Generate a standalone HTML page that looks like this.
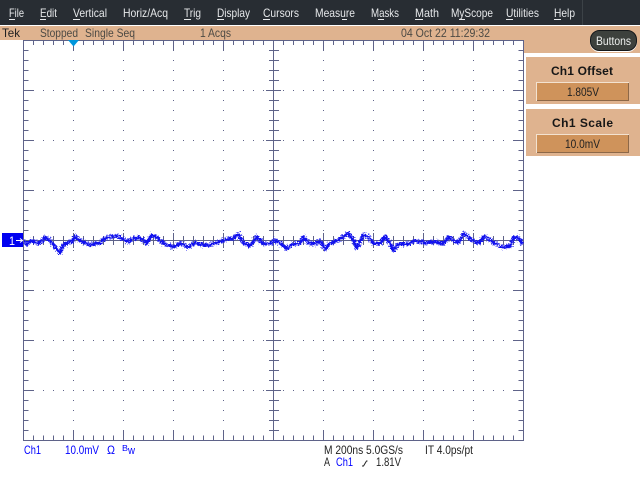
<!DOCTYPE html>
<html><head><meta charset="utf-8"><title>Tek</title>
<style>
html,body{margin:0;padding:0;background:#fff;width:640px;height:480px;overflow:hidden}
svg{display:block;position:absolute;left:0;top:0}
text{font-family:"Liberation Sans",sans-serif;font-size:12px}
.m{fill:#e6e8ea}
.s{fill:#4c4a44}
.b{fill:#0000ff}
.k{fill:#222}
.h{font-weight:bold;fill:#161616;font-size:12px}
.g line{stroke:#5f6389;shape-rendering:crispEdges}
.d line{stroke:#5f6389;stroke-width:1;stroke-dasharray:1 9;shape-rendering:crispEdges}
</style></head><body>
<svg width="640" height="480" viewBox="0 0 640 480">
<defs>
<filter id="j" x="-2%" y="-40%" width="104%" height="180%" color-interpolation-filters="sRGB"><feTurbulence type="fractalNoise" baseFrequency="0.6 0.8" numOctaves="2" seed="7" result="n"/><feDisplacementMap in="SourceGraphic" in2="n" scale="7" xChannelSelector="R" yChannelSelector="G"/></filter>
</defs>
<rect width="640" height="480" fill="#fff"/>
<rect width="640" height="25" fill="#282d33"/>
<rect x="524" y="26" width="116" height="27" fill="#dfb38f"/>
<rect y="26" width="640" height="14" fill="#dfb38f"/>
<rect x="582" y="0" width="1" height="25" fill="#3c4247"/>

<text class="m" x="9" y="17" textLength="15" lengthAdjust="spacingAndGlyphs">File</text>
<text class="m" x="40" y="17" textLength="17" lengthAdjust="spacingAndGlyphs">Edit</text>
<text class="m" x="73" y="17" textLength="34" lengthAdjust="spacingAndGlyphs">Vertical</text>
<text class="m" x="123" y="17" textLength="45" lengthAdjust="spacingAndGlyphs">Horiz/Acq</text>
<text class="m" x="184" y="17" textLength="17" lengthAdjust="spacingAndGlyphs">Trig</text>
<text class="m" x="217" y="17" textLength="33" lengthAdjust="spacingAndGlyphs">Display</text>
<text class="m" x="263" y="17" textLength="36" lengthAdjust="spacingAndGlyphs">Cursors</text>
<text class="m" x="315" y="17" textLength="40" lengthAdjust="spacingAndGlyphs">Measure</text>
<text class="m" x="371" y="17" textLength="28" lengthAdjust="spacingAndGlyphs">Masks</text>
<text class="m" x="415" y="17" textLength="24" lengthAdjust="spacingAndGlyphs">Math</text>
<text class="m" x="451" y="17" textLength="42" lengthAdjust="spacingAndGlyphs">MyScope</text>
<text class="m" x="506" y="17" textLength="33" lengthAdjust="spacingAndGlyphs">Utilities</text>
<text class="m" x="554" y="17" textLength="21" lengthAdjust="spacingAndGlyphs">Help</text>
<g fill="#e6e8ea" shape-rendering="crispEdges">
<rect x="9" y="19" width="6" height="1"/><rect x="40" y="19" width="6" height="1"/><rect x="73" y="19" width="7" height="1"/><rect x="184" y="19" width="7" height="1"/><rect x="217" y="19" width="7" height="1"/><rect x="263" y="19" width="7" height="1"/><rect x="342" y="19" width="5" height="1"/><rect x="378" y="19" width="6" height="1"/><rect x="415" y="19" width="8" height="1"/><rect x="459" y="19" width="6" height="1"/><rect x="506" y="19" width="7" height="1"/><rect x="554" y="19" width="7" height="1"/>
</g>

<text class="k" x="2" y="37" textLength="18" lengthAdjust="spacingAndGlyphs">Tek</text>
<text class="s" x="40" y="37" textLength="38" lengthAdjust="spacingAndGlyphs">Stopped</text>
<text class="s" x="85" y="37" textLength="50" lengthAdjust="spacingAndGlyphs">Single Seq</text>
<text class="s" x="200" y="37" textLength="31" lengthAdjust="spacingAndGlyphs">1 Acqs</text>
<text class="s" x="401" y="37" textLength="89" lengthAdjust="spacingAndGlyphs">04 Oct 22 11:29:32</text>

<!-- graticule -->
<g class="d">
<line x1="73.5" y1="50" x2="73.5" y2="431"/><line x1="123.5" y1="50" x2="123.5" y2="431"/><line x1="173.5" y1="50" x2="173.5" y2="431"/><line x1="223.5" y1="50" x2="223.5" y2="431"/>
<line x1="323.5" y1="50" x2="323.5" y2="431"/><line x1="373.5" y1="50" x2="373.5" y2="431"/><line x1="423.5" y1="50" x2="423.5" y2="431"/><line x1="473.5" y1="50" x2="473.5" y2="431"/>
<line x1="33" y1="90.5" x2="514" y2="90.5"/><line x1="33" y1="140.5" x2="514" y2="140.5"/><line x1="33" y1="190.5" x2="514" y2="190.5"/>
<line x1="33" y1="290.5" x2="514" y2="290.5"/><line x1="33" y1="340.5" x2="514" y2="340.5"/><line x1="33" y1="390.5" x2="514" y2="390.5"/>
</g>
<g class="g">
<line x1="23.5" y1="40" x2="23.5" y2="441"/><line x1="523.5" y1="40" x2="523.5" y2="441"/>
<line x1="23" y1="40.5" x2="524" y2="40.5"/><line x1="23" y1="440.5" x2="524" y2="440.5"/>
<line x1="273.5" y1="40" x2="273.5" y2="441"/><line x1="23" y1="240.5" x2="524" y2="240.5"/>
<line x1="33" y1="42.5" x2="514" y2="42.5" stroke-width="5" stroke-dasharray="1 9"/>
<line x1="33" y1="438" x2="514" y2="438" stroke-width="5" stroke-dasharray="1 9"/>
<line x1="33" y1="240.5" x2="514" y2="240.5" stroke-width="9" stroke-dasharray="1 9"/>
<line x1="26" y1="50" x2="26" y2="431" stroke-width="5" stroke-dasharray="1 9"/>
<line x1="521" y1="50" x2="521" y2="431" stroke-width="5" stroke-dasharray="1 9"/>
<path d="M269 50.5h10M269 60.5h10M269 70.5h10M269 80.5h10M269 100.5h10M269 110.5h10M269 120.5h10M269 130.5h10M269 150.5h10M269 160.5h10M269 170.5h10M269 180.5h10M269 200.5h10M269 210.5h10M269 220.5h10M269 230.5h10M269 250.5h10M269 260.5h10M269 270.5h10M269 280.5h10M269 300.5h10M269 310.5h10M269 320.5h10M269 330.5h10M269 350.5h10M269 360.5h10M269 370.5h10M269 380.5h10M269 400.5h10M269 410.5h10M269 420.5h10M269 430.5h10" stroke="#5f6389" fill="none" shape-rendering="crispEdges"/>
<path d="M23 90.5h11M23 140.5h11M23 190.5h11M23 240.5h11M23 290.5h11M23 340.5h11M23 390.5h11M513 90.5h11M513 140.5h11M513 190.5h11M513 240.5h11M513 290.5h11M513 340.5h11M513 390.5h11M266 90.5h15M266 140.5h15M266 190.5h15M266 240.5h15M266 290.5h15M266 340.5h15M266 390.5h15M73.5 40v11M123.5 40v11M173.5 40v11M223.5 40v11M323.5 40v11M373.5 40v11M423.5 40v11M473.5 40v11M73.5 430v11M123.5 430v11M173.5 430v11M223.5 430v11M323.5 430v11M373.5 430v11M423.5 430v11M473.5 430v11M73.5 233v15M123.5 233v15M173.5 233v15M223.5 233v15M323.5 233v15M373.5 233v15M423.5 233v15M473.5 233v15" stroke="#5f6389" fill="none" shape-rendering="crispEdges"/>
</g>
<polygon points="68,40 79,40 73.500,46.500" fill="#0096dc"/>

<!-- trace -->
<polyline filter="url(#j)" fill="none" stroke="#1212ee" stroke-width="3.4" stroke-linejoin="round" points="23.3,240.7 26.7,244 30,241.7 33.3,240.7 36.7,243.3 40,242.7 45,237.3 50,240.7 53.300,245 56.700,249.300 60,252.700 63.300,245 66.700,243.300 71.700,241.700 75,236 78.300,239.300 81.700,241.700 85,242.700 90,245 95,244 100,242.700 105,238.300 111.700,236.700 116.700,235.700 121.700,238.300 128.300,241.700 133.300,238.300 138.300,237.300 143.300,240 146.700,243.300 151.700,235 156.700,237.300 161.700,241.700 166.700,245 173.300,246.700 181.700,243.300 188.300,247.300 195,242.700 203.300,245 210,245 216.700,242.700 226.700,239.300 233.300,238.300 238.300,234 243.300,242.700 250,246 256.700,236.700 263.300,244 271.700,243.300 275,240 280,243.300 286.700,248.300 293.300,244 300,243.300 303.300,237.300 308.300,242.700 315,244 320,240.700 325,249.300 330,243.300 336.700,240.700 343.300,236.700 348.300,233.300 353.300,240 356.700,248.300 363.300,235 368.300,236.700 373.300,243.300 380,243.300 385,236.700 390,243.300 393.300,250.700 398.300,244 408.300,244 415,240.700 425,242.700 435,241.700 443.300,244 448.300,237.300 458.300,242.700 464,233.300 471.700,240 478.300,243.300 485,236 491.700,241.700 501.700,246.700 510,246.700 513.300,238.300 518.300,237.300 522.300,244"/>

<!-- channel marker -->
<rect x="2" y="233" width="21" height="14" fill="#0000f0"/>
<text x="9" y="245" fill="#fff" style="font-size:12px" textLength="6" lengthAdjust="spacingAndGlyphs">1</text>
<path d="M16 240.500h6M20 238.500l2.500 2-2.500 2" stroke="#fff" fill="none"/>

<!-- right panels -->
<rect x="526" y="57" width="114" height="47" fill="#dfb38f"/>
<rect x="526" y="109" width="114" height="47" fill="#dfb38f"/>
<text class="h" x="551" y="75" textLength="62" lengthAdjust="spacing">Ch1 Offset</text>
<text class="h" x="552" y="127" textLength="61" lengthAdjust="spacing">Ch1 Scale</text>
<rect x="536" y="82" width="93" height="19" fill="#cf935b"/>
<path d="M536.500 101V82.500H629" stroke="#f3e2d0" fill="none" shape-rendering="crispEdges"/>
<path d="M537 100.500H628.500V83" stroke="#8d6848" fill="none" shape-rendering="crispEdges"/>
<rect x="536" y="134" width="93" height="19" fill="#cf935b"/>
<path d="M536.500 153V134.500H629" stroke="#f3e2d0" fill="none" shape-rendering="crispEdges"/>
<path d="M537 152.500H628.500V135" stroke="#8d6848" fill="none" shape-rendering="crispEdges"/>
<text class="k" x="567" y="96" textLength="32" lengthAdjust="spacingAndGlyphs">1.805V</text>
<text class="k" x="565" y="148" textLength="35" lengthAdjust="spacingAndGlyphs">10.0mV</text>

<!-- Buttons pill -->
<rect x="590.500" y="31.500" width="46" height="20" rx="9" ry="9" fill="#fff" stroke="#fff"/>
<rect x="590.500" y="30.500" width="46" height="20" rx="9" ry="9" fill="#3d413d" stroke="#15181a"/>
<text x="596" y="45" fill="#eef0ee" textLength="35" lengthAdjust="spacingAndGlyphs">Buttons</text>

<!-- bottom readouts -->
<text class="b" x="24" y="454" textLength="17" lengthAdjust="spacingAndGlyphs">Ch1</text>
<text class="b" x="65" y="454" textLength="34" lengthAdjust="spacingAndGlyphs">10.0mV</text>
<text class="b" x="107" y="454" textLength="8" lengthAdjust="spacingAndGlyphs">Ω</text>
<text class="b" x="122" y="451" style="font-size:8px" textLength="6" lengthAdjust="spacingAndGlyphs">B</text>
<text class="b" x="128" y="454" style="font-size:11px" textLength="7" lengthAdjust="spacingAndGlyphs">w</text>
<text class="k" x="324" y="454" textLength="79" lengthAdjust="spacingAndGlyphs">M 200ns 5.0GS/s</text>
<text class="k" x="425" y="454" textLength="48" lengthAdjust="spacingAndGlyphs">IT 4.0ps/pt</text>
<text class="k" x="324" y="466" textLength="6" lengthAdjust="spacingAndGlyphs">A</text>
<text class="b" x="336" y="466" textLength="17" lengthAdjust="spacingAndGlyphs">Ch1</text>
<path d="M362 466h1.500l3-5h1" stroke="#222" fill="none"/>
<text class="k" x="376" y="466" textLength="25" lengthAdjust="spacingAndGlyphs">1.81V</text>
</svg>
</body></html>
